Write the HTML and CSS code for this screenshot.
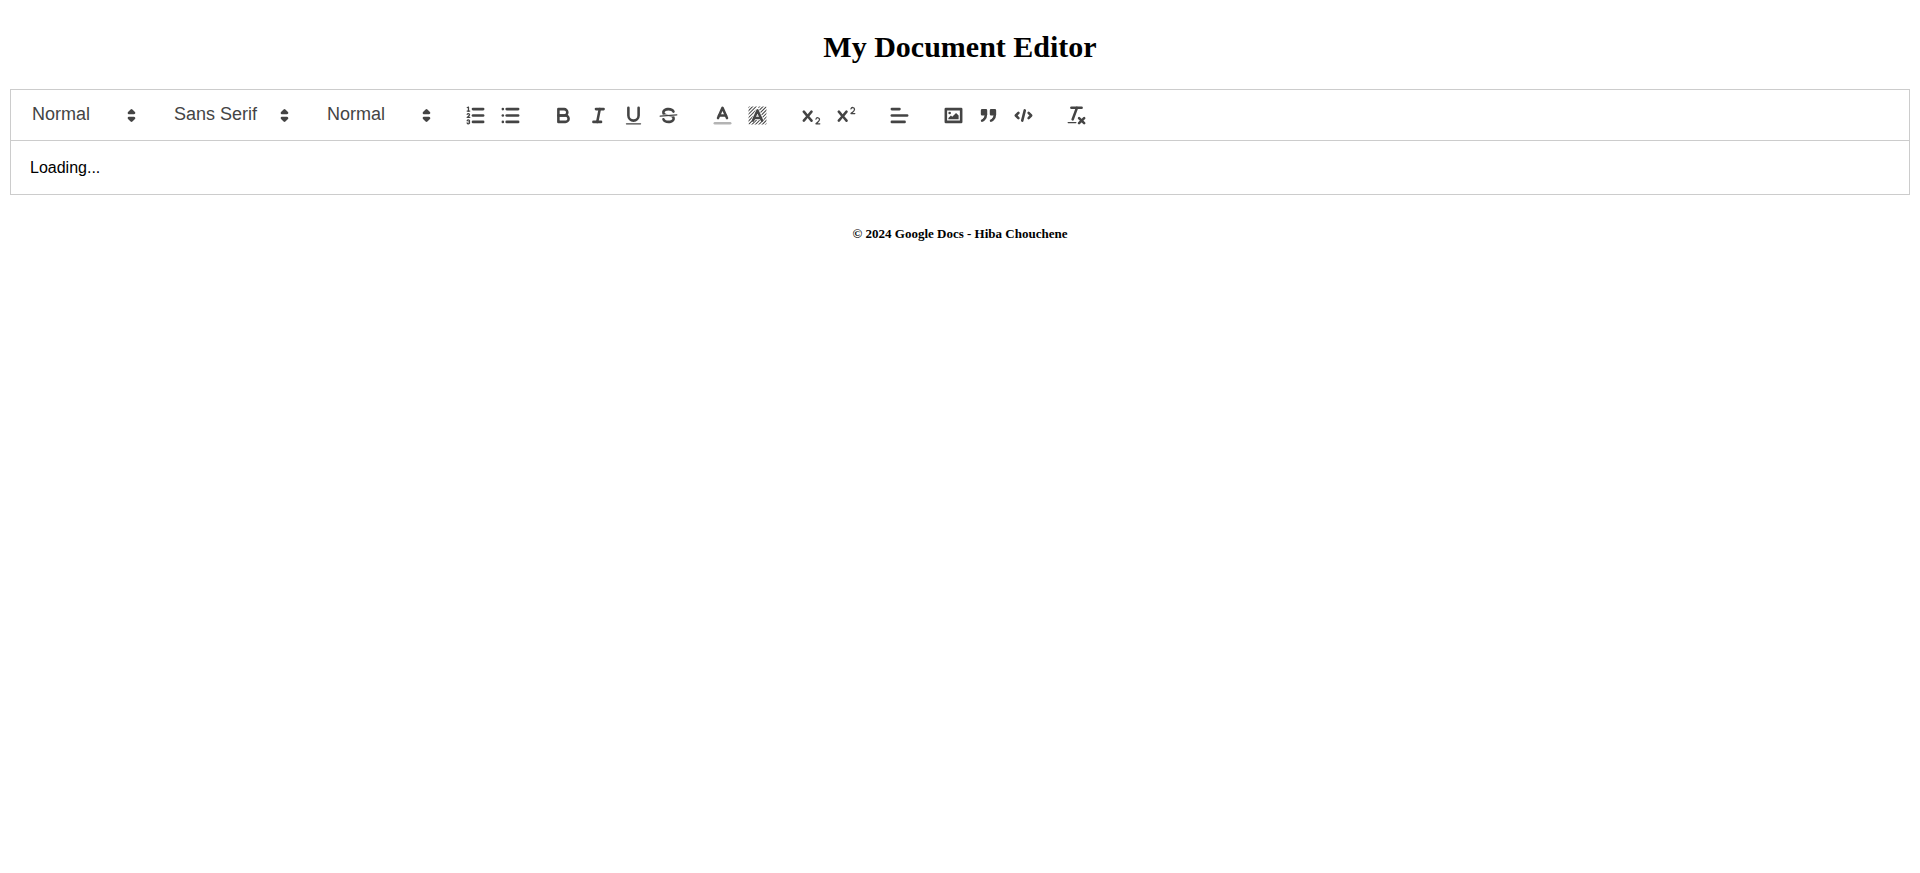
FILE: index.html
```html
<!DOCTYPE html>
<html lang="en">
<head>
<meta charset="utf-8">
<meta name="viewport" content="width=device-width, initial-scale=1">
<title>My Document Editor</title>
<link rel="stylesheet" href="styles.css">
</head>
<body>
<h1 class="title">My Document Editor</h1>
<main class="document">
<div class="toolbar" role="toolbar" aria-label="Formatting">
  <span class="formats"><span class="picker">
    <select class="picker-select" aria-label="Heading"><option>Normal</option></select>
    <svg class="picker-arrows" viewBox="0 0 18 18"><polygon class="stroke" points="7 11 9 13 11 11 7 11"/><polygon class="stroke" points="7 7 9 5 11 7 7 7"/></svg>
  </span></span><span class="formats"><span class="picker picker-font">
    <select class="picker-select" aria-label="Font"><option>Sans Serif</option></select>
    <svg class="picker-arrows" viewBox="0 0 18 18"><polygon class="stroke" points="7 11 9 13 11 11 7 11"/><polygon class="stroke" points="7 7 9 5 11 7 7 7"/></svg>
  </span></span><span class="formats"><span class="picker">
    <select class="picker-select" aria-label="Size"><option>Normal</option></select>
    <svg class="picker-arrows" viewBox="0 0 18 18"><polygon class="stroke" points="7 11 9 13 11 11 7 11"/><polygon class="stroke" points="7 7 9 5 11 7 7 7"/></svg>
  </span></span>
  <span class="formats">
    <button class="tool" type="button" aria-label="Ordered list"><svg class="icon" viewBox="0 0 18 18"><line class="stroke" x1="7" x2="15" y1="4" y2="4"/><line class="stroke" x1="7" x2="15" y1="9" y2="9"/><line class="stroke" x1="7" x2="15" y1="14" y2="14"/><line class="stroke thin" x1="2.5" x2="4.5" y1="5.5" y2="5.5"/><path class="fill" d="M3.5,6A0.5,0.5,0,0,1,3,5.5V3.085l-0.276.138A0.5,0.5,0,0,1,2.053,3c-0.124-.247-0.023-0.324.224-0.447l1-.5A0.5,0.5,0,0,1,4,2.5v3A0.5,0.5,0,0,1,3.5,6Z"/><path class="stroke thin" d="M4.5,10.5h-2c0-.234,1.85-1.076,1.85-2.234A0.959,0.959,0,0,0,2.5,8.156"/><path class="stroke thin" d="M2.5,14.846a0.959,0.959,0,0,0,1.85-.109A0.7,0.7,0,0,0,3.75,14a0.688,0.688,0,0,0,.6-0.736,0.959,0.959,0,0,0-1.85-.109"/></svg></button>
    <button class="tool" type="button" aria-label="Bullet list"><svg class="icon" viewBox="0 0 18 18"><line class="stroke" x1="6" x2="15" y1="4" y2="4"/><line class="stroke" x1="6" x2="15" y1="9" y2="9"/><line class="stroke" x1="6" x2="15" y1="14" y2="14"/><line class="stroke" x1="3" x2="3" y1="4" y2="4"/><line class="stroke" x1="3" x2="3" y1="9" y2="9"/><line class="stroke" x1="3" x2="3" y1="14" y2="14"/></svg></button>
  </span>
  <span class="formats">
    <button class="tool" type="button" aria-label="Bold"><svg class="icon" viewBox="0 0 18 18"><path class="stroke" d="M5,4H9.5A2.5,2.5,0,0,1,12,6.5v0A2.5,2.5,0,0,1,9.5,9H5V4Z"/><path class="stroke" d="M5,9h5.5A2.5,2.5,0,0,1,13,11.5v0A2.5,2.5,0,0,1,10.5,14H5V9Z"/></svg></button>
    <button class="tool" type="button" aria-label="Italic"><svg class="icon" viewBox="0 0 18 18"><line class="stroke" x1="7" x2="13" y1="4" y2="4"/><line class="stroke" x1="5" x2="11" y1="14" y2="14"/><line class="stroke" x1="8" x2="10" y1="14" y2="4"/></svg></button>
    <button class="tool" type="button" aria-label="Underline"><svg class="icon" viewBox="0 0 18 18"><path class="stroke" d="M5,3V9a4.012,4.012,0,0,0,4,4H9a4.012,4.012,0,0,0,4-4V3"/><rect class="fill" height="1" rx="0.5" ry="0.5" width="12" x="3" y="15"/></svg></button>
    <button class="tool" type="button" aria-label="Strikethrough"><svg class="icon" viewBox="0 0 18 18"><line class="stroke thin" x1="15.5" x2="2.5" y1="8.5" y2="9.5"/><path class="fill" d="M9.007,8C6.542,7.791,6,7.519,6,6.5,6,5.792,7.283,5,9,5c1.571,0,2.765.679,2.969,1.309a1,1,0,0,0,1.9-.617C13.356,4.106,11.354,3,9,3,6.2,3,4,4.538,4,6.5a3.2,3.2,0,0,0,.5,1.843Z"/><path class="fill" d="M8.984,10C11.457,10.208,12,10.479,12,11.5c0,0.708-1.283,1.5-3,1.5-1.571,0-2.765-.679-2.969-1.309a1,1,0,1,0-1.9.617C4.644,13.894,6.646,15,9,15c2.8,0,5-1.538,5-3.5a3.2,3.2,0,0,0-.5-1.843Z"/></svg></button>
  </span>
  <span class="formats">
    <button class="tool" type="button" aria-label="Text color"><svg class="icon" viewBox="0 0 18 18"><line class="stroke faint" x1="3" x2="15" y1="15" y2="15"/><polyline class="stroke" points="5.5 11 9 3 12.5 11"/><line class="stroke" x1="11.63" x2="6.38" y1="9" y2="9"/></svg></button>
    <button class="tool" type="button" aria-label="Background color"><svg class="icon" viewBox="0 0 18 18"><clipPath id="hatch"><rect x="2" y="2" width="14" height="14" rx="0.5"/></clipPath><g clip-path="url(#hatch)"><path class="stroke hatch" d="M0,4.5L4.5,0M0,7.2L7.2,0M0,9.9L9.9,0M0,12.6L12.6,0M0,15.3L15.3,0M0,18L18,0M2.7,18L18,2.7M5.4,18L18,5.4M8.1,18L18,8.1M10.8,18L18,10.8M13.5,18L18,13.5"/></g><path class="halo" d="M5.5,13L9,5L12.5,13M11.63,11H6.38"/><polyline class="stroke" points="5.5 13 9 5 12.5 13"/><line class="stroke" x1="11.63" x2="6.38" y1="11" y2="11"/></svg></button>
  </span>
  <span class="formats">
    <button class="tool" type="button" aria-label="Subscript"><svg class="icon" viewBox="0 0 18 18"><path class="fill" d="M15.5,15H13.861a3.858,3.858,0,0,0,1.914-2.975,1.8,1.8,0,0,0-1.6-1.751A1.921,1.921,0,0,0,12.021,11.7a0.5,0.5,0,1,0,.957.291h0a0.914,0.914,0,0,1,1.053-.725,0.81,0.81,0,0,1,.744.762c0,1.076-1.17,1.87-1.94,2.431A1.456,1.456,0,0,0,12,15.5a0.5,0.5,0,0,0,.5.5h3A0.5,0.5,0,0,0,15.5,15Z"/><path class="fill" d="M9.65,5.241a1,1,0,0,0-1.409.108L6,7.964,3.759,5.349A1,1,0,0,0,2.192,6.592Q2.215,6.621,2.241,6.649L4.684,9.5,2.241,12.35A1,1,0,0,0,3.71,13.707q0.026-.028.049-0.057L6,11.036,8.241,13.65a1,1,0,1,0,1.567-1.243Q9.785,12.378,9.759,12.35L7.316,9.5,9.759,6.651A1,1,0,0,0,9.65,5.241Z"/></svg></button>
    <button class="tool" type="button" aria-label="Superscript"><svg class="icon" viewBox="0 0 18 18"><path class="fill" d="M15.5,7H13.861a4.015,4.015,0,0,0,1.914-2.975,1.8,1.8,0,0,0-1.6-1.751A1.922,1.922,0,0,0,12.021,3.7a0.5,0.5,0,1,0,.957.291,0.917,0.917,0,0,1,1.053-.725,0.81,0.81,0,0,1,.744.762c0,1.077-1.164,1.925-1.934,2.486A1.423,1.423,0,0,0,12,7.5a0.5,0.5,0,0,0,.5.5h3A0.5,0.5,0,0,0,15.5,7Z"/><path class="fill" d="M9.65,5.241a1,1,0,0,0-1.409.108L6,7.964,3.759,5.349A1,1,0,0,0,2.192,6.592Q2.215,6.621,2.241,6.649L4.684,9.5,2.241,12.35A1,1,0,0,0,3.71,13.707q0.026-.028.049-0.057L6,11.036,8.241,13.65a1,1,0,1,0,1.567-1.243Q9.785,12.378,9.759,12.35L7.316,9.5,9.759,6.651A1,1,0,0,0,9.65,5.241Z"/></svg></button>
  </span>
  <span class="formats">
    <button class="tool" type="button" aria-label="Align"><svg class="icon" viewBox="0 0 18 18"><line class="stroke" x1="3" x2="15" y1="9" y2="9"/><line class="stroke" x1="3" x2="13" y1="14" y2="14"/><line class="stroke" x1="3" x2="9" y1="4" y2="4"/></svg></button>
  </span>
  <span class="formats">
    <button class="tool" type="button" aria-label="Image"><svg class="icon" viewBox="0 0 18 18"><rect class="stroke" height="10" width="12" x="3" y="4"/><circle class="fill" cx="6" cy="7" r="1"/><polyline class="fill" points="5 12 5 11 7 9 8 10 11 7 13 9 13 12 5 12"/></svg></button>
    <button class="tool" type="button" aria-label="Blockquote"><svg class="icon" viewBox="0 0 18 18"><rect class="stroke fill" height="3" width="3" x="4" y="5"/><rect class="stroke fill" height="3" width="3" x="11" y="5"/><path class="stroke fill" d="M7,8c0,4.031-3,5-3,5"/><path class="stroke fill" d="M14,8c0,4.031-3,5-3,5"/></svg></button>
    <button class="tool" type="button" aria-label="Code block"><svg class="icon" viewBox="0 0 18 18"><polyline class="stroke" points="5 7 3 9 5 11"/><polyline class="stroke" points="13 7 15 9 13 11"/><line class="stroke" x1="10" x2="8" y1="5" y2="13"/></svg></button>
  </span>
  <span class="formats">
    <button class="tool" type="button" aria-label="Clear formatting"><svg class="icon" viewBox="0 0 18 18"><line class="stroke" x1="5" x2="13" y1="3" y2="3"/><line class="stroke" x1="6" x2="9.35" y1="12" y2="3"/><line class="stroke" x1="11" x2="15" y1="11" y2="15"/><line class="stroke" x1="15" x2="11" y1="11" y2="15"/><rect class="fill" height="1" rx="0.5" ry="0.5" width="7" x="2" y="14"/></svg></button>
  </span>
</div>
<div class="editor">Loading...</div>
</main>
<footer class="footer">© 2024 Google Docs - Hiba Chouchene</footer>
</body>
</html>
```
FILE: styles.css
```css
* {
  box-sizing: border-box;
}

body {
  margin: 0 8px;
  background: #fff;
  color: #000;
  font-family: "Liberation Serif", "Times New Roman", serif;
  display: flow-root;
}

.title {
  margin: 30px 0 25px;
  font-size: 30px;
  line-height: 34px;
  text-align: center;
}

.document {
  margin: 0 2px;
  border: 1px solid #ccc;
  font-family: "Liberation Sans", Arial, sans-serif;
}

.toolbar {
  padding: 8px 6px;
  border-bottom: 1px solid #ccc;
  font-size: 13px;
  line-height: 0;
}

.formats {
  display: inline-flex;
  vertical-align: middle;
  margin-right: 15px;
}

.picker {
  position: relative;
  width: 127px;
  height: 34px;
}

.picker-font {
  width: 138px;
}

.picker-select {
  appearance: none;
  width: 100%;
  height: 32px;
  padding: 0 26px 0 15px;
  border: 0;
  background: transparent;
  color: #444;
  font-family: inherit;
  font-size: 18px;
  font-weight: 500;
  cursor: pointer;
}

.picker-arrows {
  position: absolute;
  top: 6px;
  right: 1px;
  width: 23px;
  height: 23px;
  pointer-events: none;
}

.tool {
  display: flex;
  align-items: center;
  justify-content: center;
  width: 35px;
  height: 34px;
  padding: 0;
  border: 0;
  background: none;
  cursor: pointer;
}

.icon {
  width: 23px;
  height: 23px;
}

.stroke {
  fill: none;
  stroke: #444;
  stroke-width: 2;
  stroke-linecap: round;
  stroke-linejoin: round;
}

.thin {
  stroke-width: 1;
}

.faint {
  opacity: 0.4;
}

.hatch {
  stroke-width: 0.8;
}

.halo {
  fill: none;
  stroke: #fff;
  stroke-width: 3;
}

.fill {
  fill: #444;
}

.editor {
  padding: 15px 19px;
  font-size: 16px;
  line-height: 23px;
}

.footer {
  margin-top: 31px;
  font-size: 13px;
  line-height: 15px;
  font-weight: bold;
  text-align: center;
}
```
